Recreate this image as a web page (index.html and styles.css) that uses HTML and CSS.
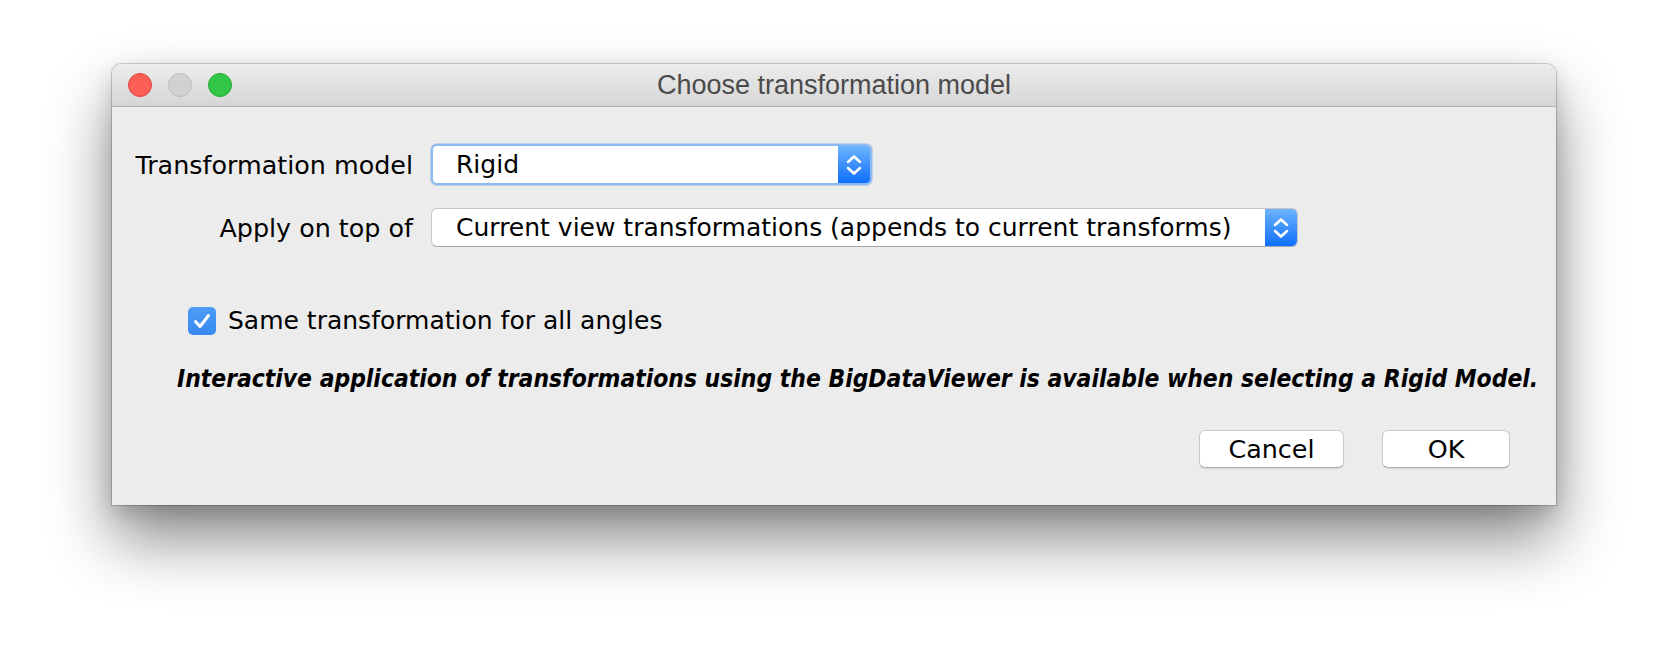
FILE: index.html
```html
<!DOCTYPE html>
<html>
<head>
<meta charset="utf-8">
<link rel="stylesheet" href="styles.css">
</head>
<body>
<div class="window">
  <div class="titlebar">
    <div class="lights">
      <span class="light red"></span>
      <span class="light gray"></span>
      <span class="light green"></span>
    </div>
    <div class="title">Choose transformation model</div>
  </div>
  <div class="content">
    <div class="form">
      <label class="label">Transformation model</label>
      <div class="combo combo-focus combo-short">
        <span class="combo-text">Rigid</span>
        <span class="combo-btn">
          <svg width="18" height="24" viewBox="0 0 18 24"><path d="M3 9 L9 3.5 L15 9 M3 15 L9 20.5 L15 15" fill="none" stroke="#fff" stroke-width="2.5" stroke-linecap="round" stroke-linejoin="round"/></svg>
        </span>
      </div>
      <label class="label">Apply on top of</label>
      <div class="combo combo-long">
        <span class="combo-text">Current view transformations (appends to current transforms)</span>
        <span class="combo-btn">
          <svg width="18" height="24" viewBox="0 0 18 24"><path d="M3 9 L9 3.5 L15 9 M3 15 L9 20.5 L15 15" fill="none" stroke="#fff" stroke-width="2.5" stroke-linecap="round" stroke-linejoin="round"/></svg>
        </span>
      </div>
    </div>
    <div class="check-row">
      <span class="checkbox">
        <svg width="28" height="28" viewBox="0 0 28 28"><path d="M7.5 14.5 L12 19.5 L20.5 8.5" fill="none" stroke="#fff" stroke-width="3" stroke-linecap="round" stroke-linejoin="round"/></svg>
      </span>
      <span class="check-label">Same transformation for all angles</span>
    </div>
    <p class="note">Interactive application of transformations using the BigDataViewer is available when selecting a Rigid Model.</p>
    <div class="buttons">
      <button class="btn btn-cancel">Cancel</button>
      <button class="btn btn-ok">OK</button>
    </div>
  </div>
</div>
</body>
</html>
```

FILE: styles.css
```css
html, body {
  margin: 0;
  padding: 0;
  background: #ffffff;
}
body {
  width: 1668px;
  height: 664px;
  overflow: hidden;
  padding: 64px 0 0 112px;
  box-sizing: border-box;
  font-family: "DejaVu Sans", "Liberation Sans", sans-serif;
}
.window {
  width: 1444px;
  height: 441px;
  background: #ececec;
  border-radius: 9px 9px 0 0;
  box-shadow: 0 0 0 1px rgba(0,0,0,0.18), 0 34px 64px rgba(0,0,0,0.47), 0 8px 20px rgba(0,0,0,0.15);
  display: flex;
  flex-direction: column;
  overflow: hidden;
}
.titlebar {
  height: 42px;
  flex: none;
  background: linear-gradient(#ececec, #d6d6d6);
  border-bottom: 1px solid #b3b3b3;
  display: flex;
  align-items: center;
  position: relative;
}
.lights {
  display: flex;
  gap: 16px;
  padding-left: 16px;
}
.light {
  width: 24px;
  height: 24px;
  border-radius: 50%;
  box-sizing: border-box;
  display: block;
}
.red { background: #fd5f57; border: 1px solid #e0443e; }
.gray { background: #d1d1d1; border: 1px solid #bcbcbc; }
.green { background: #33c748; border: 1px solid #27a83a; }
.title {
  position: absolute;
  left: 0;
  right: 0;
  top: 0;
  bottom: 0;
  display: flex;
  align-items: center;
  justify-content: center;
  font-family: "Liberation Sans", Arial, sans-serif;
  font-size: 27px;
  color: #4b4b4b;
  pointer-events: none;
}
.content {
  padding: 37px 23px 0 23px;
  display: flex;
  flex-direction: column;
}
.form {
  display: grid;
  grid-template-columns: 278px auto;
  column-gap: 18px;
  row-gap: 23px;
  align-items: center;
  justify-items: start;
}
.label {
  justify-self: end;
  font-size: 25.4px;
  color: #000;
}
.combo {
  display: flex;
  align-items: stretch;
  background: #fff;
  border-radius: 6px;
  box-sizing: border-box;
}
.combo-short {
  width: 441px;
  height: 41px;
  border: 2px solid #8cb9f3;
  box-shadow: 0 0 0 1px rgba(110,160,230,0.35);
}
.combo-long {
  width: 867px;
  height: 39px;
  border: 1px solid #c6c6c6;
  border-bottom-color: #a9a9a9;
}
.combo-text {
  flex: 1;
  display: flex;
  align-items: center;
  padding-left: 24px;
  font-size: 25px;
  color: #000;
  white-space: nowrap;
}
.combo-focus .combo-text { padding-left: 23px; }
.combo-btn {
  width: 32px;
  flex: none;
  background: linear-gradient(#6db3fd, #0f6ffd);
  border-radius: 0 5px 5px 0;
  display: flex;
  align-items: center;
  justify-content: center;
}
.combo-focus .combo-btn { width: 32px; border-radius: 0 4px 4px 0; }
.check-row {
  display: flex;
  align-items: center;
  margin-top: 59px;
  padding-left: 53px;
}
.checkbox {
  width: 28px;
  height: 28px;
  border-radius: 5px;
  background: linear-gradient(#4d9cf8, #3789f2);
  display: block;
  flex: none;
}
.checkbox svg { display: block; }
.check-label {
  margin-left: 12px;
  font-size: 25px;
  color: #000;
}
.note {
  margin: 29px 0 0 42px;
  font-size: 24.4px;
  font-weight: bold;
  font-style: italic;
  font-stretch: condensed;
  color: #000;
  white-space: nowrap;
}
.buttons {
  display: flex;
  justify-content: flex-end;
  gap: 38px;
  margin-top: 37px;
  padding-right: 23px;
}
.btn {
  height: 38px;
  background: #fff;
  border: 1px solid #c8c8c8;
  border-bottom-color: #adadad;
  border-radius: 6px;
  font-family: "DejaVu Sans", "Liberation Sans", sans-serif;
  font-size: 25.4px;
  color: #000;
  padding: 0;
  box-shadow: 0 1px 1px rgba(0,0,0,0.08);
}
.btn-cancel { width: 145px; }
.btn-ok { width: 128px; }
```
